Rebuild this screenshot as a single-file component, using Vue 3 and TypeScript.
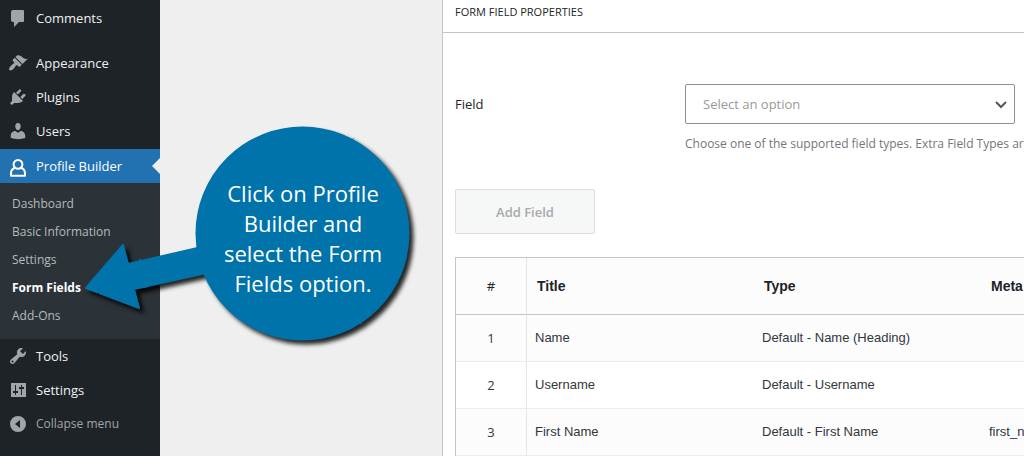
<script setup lang="ts">
import { ref } from 'vue'

interface MenuItem {
  label: string
  paths: string[]
  gapBefore?: boolean
  current?: boolean
  submenu?: string[]
}

const menu: MenuItem[] = [
  {
    label: 'Comments',
    paths: ['M5 2h10q1 0 1 1v10q0 1-1 1h-4l-5 5v-5H5q-2 0-2-2V4q0-2 2-2z'],
  },
  {
    label: 'Appearance',
    gapBefore: true,
    paths: [
      'M14.48 11.06L7.41 3.99l1.5-1.5c.5-.56 2.3-.47 3.51.32 1.21.8 1.43 1.28 2.91 2.1 1.18.64 2.45 1.26 4.45.85zm-.71.71L6.7 4.7 4.93 6.47c-.39.39-.39 1.02 0 1.41l1.06 1.06c.39.39.39 1.03 0 1.42-.6.6-1.43 1.11-2.21 1.69-.35.26-.7.53-1.01.84C1.43 14.23.4 16.08 1.4 17.07c.99 1 2.84-.03 4.18-1.36.31-.31.58-.66.85-1.02.57-.78 1.08-1.61 1.69-2.21.39-.39 1.02-.39 1.41 0l1.06 1.06c.39.39 1.02.39 1.41 0z',
    ],
  },
  {
    label: 'Plugins',
    paths: [
      'M13.11 4.36L9.87 7.6 8 5.73l3.24-3.24c.35-.34 1.05-.2 1.56.32.52.51.66 1.21.31 1.55zm-8 1.77l.91-1.12 9.01 9.01-1.19.84c-.71.71-2.63 1.16-3.82 1.16H6.14L4.9 17.26c-.59.59-1.54.59-2.12 0-.59-.58-.59-1.53 0-2.12l1.24-1.24v-3.88c0-1.13.4-3.19 1.09-3.89zm7.26 3.97l3.24-3.24c.34-.35 1.04-.21 1.55.31.52.51.66 1.21.31 1.55l-3.24 3.25z',
    ],
  },
  {
    label: 'Users',
    paths: [
      'M10 9.25c-2.27 0-2.73-3.44-2.73-3.44C7 4.02 7.82 2 9.97 2c2.16 0 2.98 2.02 2.71 3.81 0 0-.41 3.44-2.68 3.44zm0 2.57L12.72 10c2.39 0 4.52 2.33 4.52 4.53v2.49s-3.65 1.13-7.24 1.13c-3.65 0-7.24-1.13-7.24-1.13v-2.49c0-2.25 1.94-4.48 4.47-4.48z',
    ],
  },
  {
    label: 'Profile Builder',
    current: true,
    paths: [
      'M10 4a4.4 4.4 0 1 1 0 8.8a4.4 4.4 0 1 1 0-8.8z',
      'M7.2 11.8C4.2 12.6 3 14.8 3 17.6v2.2h14v-2.2c0-2.8-1.2-5-4.2-5.8',
    ],
    submenu: ['Dashboard', 'Basic Information', 'Settings', 'Form Fields', 'Add-Ons'],
  },
  {
    label: 'Tools',
    paths: [
      'M16.68 9.77c-1.34 1.34-3.3 1.67-4.95.99l-5.41 6.52c-.99.99-2.59.99-3.58 0s-.99-2.59 0-3.57l6.52-5.42c-.68-1.65-.35-3.61.99-4.95 1.28-1.28 3.12-1.62 4.72-1.06l-2.89 2.89 2.82 2.82 2.86-2.87c.53 1.58.18 3.39-1.08 4.65zM3.81 16.21c.4.39 1.04.39 1.43 0 .4-.4.4-1.04 0-1.43-.39-.4-1.03-.4-1.43 0-.39.39-.39 1.03 0 1.43z',
    ],
  },
  {
    label: 'Settings',
    paths: [
      'M3 3h15v14H3zM7 5v6H5v2h2v2h1v-2h2v-2H8V5zM13 5v2h-2v2h2v6h1V9h2V7h-2V5z',
    ],
  },
]

const currentSub = 'Form Fields'
const fieldType = ref('')

const rows = [
  { id: 1, title: 'Name', type: 'Default - Name (Heading)', meta: '' },
  { id: 2, title: 'Username', type: 'Default - Username', meta: '' },
  { id: 3, title: 'First Name', type: 'Default - First Name', meta: 'first_name' },
]
</script>

<template>
  <div class="page">
    <nav class="sidebar" aria-label="Main menu">
      <ul class="menu">
        <li v-for="item in menu" :key="item.label" :class="{ gap: item.gapBefore, open: item.current }">
          <a href="#" class="item" :class="{ current: item.current }">
            <svg class="icon" viewBox="0 0 20 20" aria-hidden="true">
              <path v-for="d in item.paths" :key="d" :d="d" fill-rule="evenodd" />
            </svg>
            <span>{{ item.label }}</span>
          </a>
          <ul v-if="item.submenu" class="submenu">
            <li v-for="sub in item.submenu" :key="sub">
              <a href="#" :class="{ selected: sub === currentSub }">{{ sub }}</a>
            </li>
          </ul>
        </li>
      </ul>
      <button type="button" class="item collapse">
        <svg class="icon" viewBox="0 0 20 20" aria-hidden="true">
          <path fill-rule="evenodd" d="M10 2a8 8 0 1 1 0 16a8 8 0 1 1 0-16zM12 6l-5 4 5 4z" />
        </svg>
        <span>Collapse menu</span>
      </button>
    </nav>

    <main class="content">
      <section class="panel">
        <h2>FORM FIELD PROPERTIES</h2>
        <form class="body" @submit.prevent>
          <div class="field">
            <label for="field-type">Field</label>
            <div class="control">
              <div class="select">
                <select id="field-type" v-model="fieldType">
                  <option value="">Select an option</option>
                  <option value="name">Default - Name (Heading)</option>
                </select>
                <svg class="chevron" viewBox="0 0 12 8" aria-hidden="true">
                  <path d="M1 1l5 5 5-5" />
                </svg>
              </div>
              <p>Choose one of the supported field types. Extra Field Types are available.</p>
            </div>
          </div>
          <button type="submit" class="add" disabled>Add Field</button>
          <table>
            <colgroup>
              <col class="c-num" /><col class="c-text" /><col class="c-text" /><col />
            </colgroup>
            <thead>
              <tr>
                <th class="num" scope="col">#</th>
                <th scope="col">Title</th>
                <th scope="col">Type</th>
                <th scope="col">Meta</th>
              </tr>
            </thead>
            <tbody>
              <tr v-for="row in rows" :key="row.id">
                <td class="num">{{ row.id }}</td>
                <td>{{ row.title }}</td>
                <td>{{ row.type }}</td>
                <td>{{ row.meta }}</td>
              </tr>
            </tbody>
          </table>
        </form>
      </section>
    </main>

    <aside class="callout">
      <svg viewBox="0 0 350 240" aria-hidden="true">
        <filter id="rough" x="-5%" y="-5%" width="110%" height="110%">
          <feTurbulence type="fractalNoise" baseFrequency="0.14" numOctaves="1" seed="4" />
          <feDisplacementMap in="SourceGraphic" scale="2" xChannelSelector="R" yChannelSelector="G" />
        </filter>
        <g class="shape">
          <g filter="url(#rough)">
            <path d="M6 168L43 125L48 144L135 124L140 150L54 169L59 188Z" />
            <circle cx="222.5" cy="113.5" r="106" />
          </g>
        </g>
      </svg>
      <p>Click on Profile Builder and select the Form Fields option.</p>
    </aside>
  </div>
</template>

<style>
body {
  margin: 0;
  background: #efefef;
}
</style>

<style scoped>
.page {
  position: relative;
  display: flex;
  height: 100vh;
  overflow: hidden;
  background: #efefef;
  color: #1d2327;
  font: 13px/20px "Open Sans", "Noto Sans", sans-serif;
}
ul {
  list-style: none;
  margin: 0;
  padding: 0;
}
.sidebar {
  flex: 0 0 160px;
  padding-top: 1px;
  background: #1d2327;
}
.gap {
  padding-top: 11px;
}
.open {
  padding-top: 1px;
}
.item {
  position: relative;
  display: flex;
  align-items: center;
  gap: 8px;
  box-sizing: border-box;
  width: 100%;
  height: 34px;
  padding: 0 8px;
  color: #f0f0f1;
  text-decoration: none;
}
.icon {
  width: 20px;
  height: 20px;
  fill: #a0a5aa;
  overflow: visible;
}
.current {
  background: #2271b1;
  color: #fff;
}
.current .icon {
  fill: none;
  stroke: #fff;
  stroke-width: 2;
  stroke-linejoin: round;
}
.current::after {
  content: "";
  position: absolute;
  right: 0;
  border: 8px solid transparent;
  border-left: 0;
  border-right-color: #efefef;
}
.submenu {
  padding: 7px 0 9px;
  background: #2c3338;
  font-size: 12px;
}
.submenu a {
  display: block;
  padding: 4px 12px;
  color: #b5babd;
  text-decoration: none;
}
.submenu a.selected {
  color: #fff;
  font-weight: 700;
}
.collapse {
  border: 0;
  background: none;
  color: #a0a5aa;
  font: inherit;
  font-size: 12px;
}
.content {
  flex: 1;
  min-width: 0;
  padding-left: 282px;
}
.panel {
  min-height: 100%;
  overflow: hidden;
  border-left: 1px solid #c3c4c7;
  background: #fff;
}
h2 {
  margin: 0;
  padding: 2px 12px 10px;
  border-bottom: 1px solid #c3c4c7;
  font-size: 11px;
  font-weight: 400;
  line-height: 20px;
}
.body {
  padding: 51px 0 0 12px;
}
.field {
  display: flex;
}
.field label {
  flex: 0 0 230px;
  line-height: 40px;
}
.control {
  flex: 1;
  min-width: 0;
}
.select {
  position: relative;
  margin-right: 9px;
}
select {
  appearance: none;
  display: block;
  width: 100%;
  height: 40px;
  padding: 0 17px;
  border: 1px solid #8c8f94;
  border-radius: 2px;
  background: #fff;
  color: #999;
  font: inherit;
}
.chevron {
  position: absolute;
  top: 17px;
  right: 8px;
  width: 12px;
  height: 8px;
  fill: none;
  stroke: #50575e;
  stroke-width: 2;
}
.control p {
  margin: 10px 0 0;
  color: #72777c;
  font-size: 12px;
  white-space: nowrap;
}
.add {
  display: block;
  width: 140px;
  height: 45px;
  margin: 35px 0 23px;
  border: 1px solid #dcdede;
  border-radius: 2px;
  background: #f6f7f7;
  color: #a7aaad;
  font: inherit;
  font-weight: 600;
}
table {
  width: 100%;
  table-layout: fixed;
  border-collapse: separate;
  border-spacing: 0;
  border: solid #c3c4c7;
  border-width: 1px 0 0 1px;
  font-family: "Liberation Sans", sans-serif;
}
.c-num {
  width: 71px;
}
.c-text {
  width: 227px;
}
th {
  height: 56px;
  padding: 0 10px;
  border-bottom: 1px solid #c3c4c7;
  background: #fcfcfc;
  font-size: 14px;
  text-align: left;
}
td {
  height: 46px;
  padding: 0 8px;
  border-bottom: 1px solid #ececec;
  color: #32373c;
  white-space: nowrap;
}
tbody tr:nth-child(odd) {
  background: #fcfcfc;
}
.num {
  padding: 0;
  border-right: 1px solid #e5e5e5;
  font: 13px/20px "Open Sans", "Noto Sans", sans-serif;
  text-align: center;
}
.callout {
  position: absolute;
  left: 80px;
  top: 120px;
  width: 350px;
  height: 240px;
}
.callout svg {
  display: block;
  width: 100%;
  height: 100%;
  overflow: visible;
}
.shape {
  fill: #0073aa;
  stroke: #0073aa;
  stroke-width: 2;
  stroke-linejoin: round;
  filter: drop-shadow(4px 4px 2px rgba(0, 0, 0, 0.85));
}
.callout p {
  position: absolute;
  left: 138px;
  top: 58px;
  width: 170px;
  margin: 0;
  color: #fff;
  font-size: 22px;
  line-height: 30px;
  text-align: center;
}
</style>
